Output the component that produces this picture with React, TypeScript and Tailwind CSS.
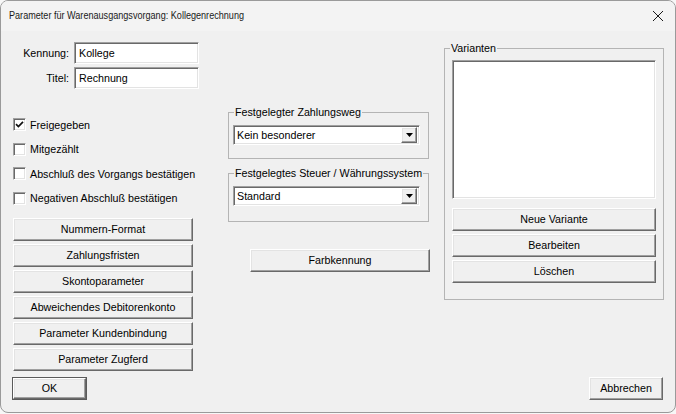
import React from 'react';

const sunken =
  'border border-t-[#a0a0a0] border-l-[#a0a0a0] border-r-white border-b-white shadow-[inset_1px_1px_0_#696969,inset_-1px_-1px_0_#e3e3e3] bg-white';
const raised =
  'border border-t-white border-l-white border-r-[#696969] border-b-[#696969] shadow-[inset_-1px_-1px_0_#a0a0a0,inset_1px_1px_0_#e3e3e3] bg-[#f0f0f0]';

const Button: React.FC<{ label: string; className?: string }> = ({ label, className = '' }) => (
  <div className={`${raised} flex items-center justify-center whitespace-nowrap text-[10.7px] leading-none ${className}`}>{label}</div>
);

const Checkbox: React.FC<{ label: string; checked?: boolean }> = ({ label, checked }) => (
  <div className="flex h-[24.5px] items-center">
    <div className={`${sunken} flex h-[13px] w-[13px] shrink-0 items-center justify-center`}>
      {checked && (
        <svg width="9" height="9" viewBox="0 0 9 9">
          <path d="M1 4.2 L3.4 6.6 L8 1.8" fill="none" stroke="#111" strokeWidth="1.7" />
        </svg>
      )}
    </div>
    <span className="ml-[4px] whitespace-nowrap text-[10.7px]">{label}</span>
  </div>
);

const Combo: React.FC<{ value: string }> = ({ value }) => (
  <div className={`${sunken} flex h-[20px] w-[187px] items-center justify-between pl-[3px] pr-[2px]`}>
    <span className="whitespace-nowrap text-[10.7px]">{value}</span>
    <div className={`${raised} flex h-[16px] w-[16px] items-center justify-center`}>
      <svg width="7" height="4" viewBox="0 0 7 4">
        <path d="M0 0 H7 L3.5 4 Z" fill="#000" />
      </svg>
    </div>
  </div>
);

const Group: React.FC<{ label: string; className?: string; children: React.ReactNode }> = ({ label, className = '', children }) => (
  <div className={`relative border border-[#b4b4b4] ${className}`}>
    <span className="absolute -top-[7px] left-[5px] whitespace-nowrap bg-[#f0f0f0] px-[1px] text-[10.7px] leading-[13px]">{label}</span>
    {children}
  </div>
);

const TextField: React.FC<{ label: string; value: string }> = ({ label, value }) => (
  <div className="flex items-center">
    <span className="w-[56px] text-right text-[10.7px]">{label}</span>
    <div className={`${sunken} ml-[5px] flex h-[22px] w-[125px] items-center pl-[4px] text-[10.7px]`}>{value}</div>
  </div>
);

export default function App() {
  return (
    <div className="h-[414px] w-[676px] bg-[#f7f7f7] font-['Liberation_Sans',Arial,sans-serif] text-black">
      <div className="flex h-[413px] w-[676px] flex-col overflow-hidden rounded-[8px] border border-[#9a9a9a] bg-[#f0f0f0]">
        <div className="flex h-[30px] shrink-0 items-center justify-between bg-[#f3f3f3] pl-[8px] pr-[11px]">
          <span className="origin-left scale-x-[0.79] whitespace-nowrap text-[11.5px] text-[#1a1a1a]">
            Parameter für Warenausgangsvorgang: Kollegenrechnung
          </span>
          <svg width="12" height="12" viewBox="0 0 12 12">
            <path d="M1 1 L11 11 M11 1 L1 11" stroke="#1a1a1a" strokeWidth="1" />
          </svg>
        </div>

        <div className="flex pl-[12px]">
          <div className="flex w-[186px] flex-col">
            <div className="mt-[11px] flex flex-col gap-[3px]">
              <TextField label="Kennung:" value="Kollege" />
              <TextField label="Titel:" value="Rechnung" />
            </div>
            <div className="mt-[23.5px] flex flex-col">
              <Checkbox label="Freigegeben" checked />
              <Checkbox label="Mitgezählt" />
              <Checkbox label="Abschluß des Vorgangs bestätigen" />
              <Checkbox label="Negativen Abschluß bestätigen" />
            </div>
            <div className="mt-[7px] flex w-[180px] flex-col gap-[3px]">
              <Button label="Nummern-Format" className="h-[23px]" />
              <Button label="Zahlungsfristen" className="h-[23px]" />
              <Button label="Skontoparameter" className="h-[23px]" />
              <Button label="Abweichendes Debitorenkonto" className="h-[23px]" />
              <Button label="Parameter Kundenbindung" className="h-[23px]" />
              <Button label="Parameter Zugferd" className="h-[23px]" />
            </div>
          </div>

          <div className="ml-[29px] flex w-[201px] flex-col">
            <Group label="Festgelegter Zahlungsweg" className="mt-[81px] h-[47px] pl-[4px] pt-[12px]">
              <Combo value="Kein besonderer" />
            </Group>
            <Group label="Festgelegtes Steuer / Währungssystem" className="mt-[14px] h-[49px] pl-[4px] pt-[12px]">
              <Combo value="Standard" />
            </Group>
            <Button label="Farbkennung" className="ml-[22px] mt-[27px] h-[23px] w-[180px]" />
          </div>

          <div className="ml-[15px] flex w-[220px] flex-col">
            <Group label="Varianten" className="mt-[17px] h-[252px] pl-[7px] pt-[11px]">
              <div className={`${sunken} h-[139px] w-[204px]`} />
              <div className="mt-[9px] flex w-[204px] flex-col gap-[3px]">
                <Button label="Neue Variante" className="h-[23px]" />
                <Button label="Bearbeiten" className="h-[23px]" />
                <Button label="Löschen" className="h-[23px]" />
              </div>
            </Group>
          </div>
        </div>

        <div className="mt-[6px] flex justify-between pl-[11px] pr-[12px]">
          <div className="h-[23px] w-[75px] border border-[#5a5a5a]">
            <Button label="OK" className="h-full w-full" />
          </div>
          <Button label="Abbrechen" className="h-[23px] w-[74px]" />
        </div>
      </div>
    </div>
  );
}
